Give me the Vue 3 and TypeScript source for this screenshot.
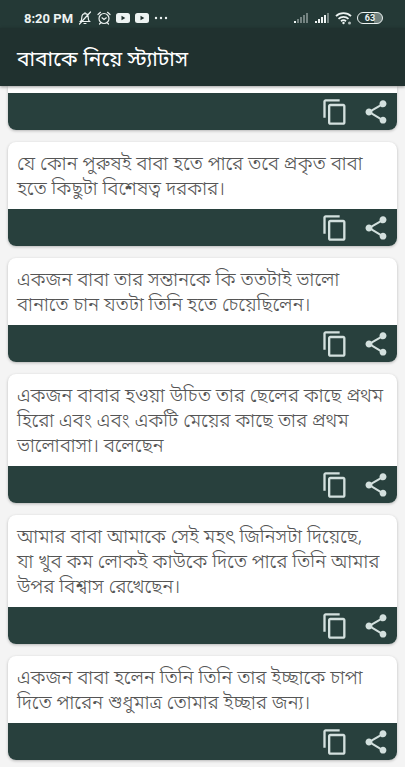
<script setup lang="ts">
interface Quote {
  id: number
  lines: string[]
}

const title = 'বাবাকে নিয়ে স্ট্যাটাস'

const quotes: Quote[] = [
  { id: 1, lines: [] },
  { id: 2, lines: ['যে কোন পুরুষই বাবা হতে পারে তবে প্রকৃত বাবা', 'হতে কিছুটা বিশেষত্ব দরকার।'] },
  { id: 3, lines: ['একজন বাবা তার সন্তানকে কি ততটাই ভালো', 'বানাতে চান যতটা তিনি হতে চেয়েছিলেন।'] },
  { id: 4, lines: ['একজন বাবার হওয়া উচিত তার ছেলের কাছে প্রথম', 'হিরো এবং এবং একটি মেয়ের কাছে তার প্রথম', 'ভালোবাসা। বলেছেন'] },
  { id: 5, lines: ['আমার বাবা আমাকে সেই মহৎ জিনিসটা দিয়েছে,', 'যা খুব কম লোকই কাউকে দিতে পারে তিনি আমার', 'উপর বিশ্বাস রেখেছেন।'] },
  { id: 6, lines: ['একজন বাবা হলেন তিনি তিনি তার ইচ্ছাকে চাপা', 'দিতে পারেন শুধুমাত্র তোমার ইচ্ছার জন্য।'] },
]

function copyQuote(quote: Quote): void {
  void navigator.clipboard?.writeText(quote.lines.join(' '))
}

function shareQuote(quote: Quote): void {
  void navigator.share?.({ text: quote.lines.join(' ') })
}
</script>

<template>
  <div class="screen">
    <div class="status">
      <div class="status-group">
        <span class="clock">8:20 PM</span>
        <svg viewBox="0 0 14 14" width="14" height="14" fill="none" stroke="currentColor" stroke-width="1.2" stroke-linecap="round">
          <path d="M2.5 10.5h9c-1-1-1.3-2-1.3-4C10.2 4 9 2.7 7 2.7S3.8 4 3.8 6.500c0 2-.3 3-1.3 4zM6 12.500h2M7 1.500v1M1.500 13 12.500 1" />
        </svg>
        <svg viewBox="0 0 14 14" width="14" height="14" fill="none" stroke="currentColor" stroke-width="1.2" stroke-linecap="round">
          <circle cx="7" cy="7.5" r="5" />
          <path d="M1 3.500 3.500 1.300M13 3.500l-2.500-2.200M5 6.800l2 1.700 2.300-1.700M3.500 12l-1 1M10.500 12l1 1" />
        </svg>
        <svg v-for="n in 2" :key="n" viewBox="0 0 14 10" width="14" height="10">
          <rect width="14" height="10" rx="2.5" fill="currentColor" />
          <path d="M5.5 2.8v4.400L9.300 5z" fill="#20302e" />
        </svg>
        <svg viewBox="0 0 14 4" width="14" height="4" fill="currentColor">
          <circle cx="2" cy="2" r="1.2" /><circle cx="7" cy="2" r="1.2" /><circle cx="12" cy="2" r="1.2" />
        </svg>
      </div>
      <div class="status-group">
        <svg v-for="strength in [1, 4]" :key="strength" viewBox="0 0 16 12" width="16" height="12" fill="currentColor">
          <rect
            v-for="bar in 5"
            :key="bar"
            :x="bar * 3 - 2"
            :y="11 - bar * 2"
            width="2"
            :height="bar * 2"
            :opacity="bar <= strength ? 1 : 0.4"
          />
        </svg>
        <svg viewBox="0 0 17 14" width="17" height="14" fill="none" stroke="currentColor" stroke-width="1.8">
          <path d="M1 5.200c4-4 11-4 15 0M3.500 7.800c2.800-2.600 7.200-2.600 10 0M6 10.200c1.500-1.300 3.500-1.300 5 0" />
          <circle cx="8.500" cy="12" r="1.2" fill="currentColor" stroke="none" />
          <circle cx="14.500" cy="12" r="1.5" fill="currentColor" stroke="none" opacity="0.7" />
        </svg>
        <span class="battery">63</span>
      </div>
    </div>

    <header class="appbar">
      <h1>{{ title }}</h1>
    </header>

    <main class="feed">
      <article v-for="quote in quotes" :key="quote.id" class="card">
        <p v-if="quote.lines.length" class="text">
          <span v-for="line in quote.lines" :key="line" class="line">{{ line }}</span>
        </p>
        <div v-else class="tail"></div>
        <div class="actions">
          <button type="button" aria-label="কপি" @click="copyQuote(quote)">
            <svg viewBox="0 0 24 24" width="28" height="28" fill="currentColor">
              <path d="M16 1H4c-1.100 0-2 .9-2 2v14h2V3h12V1zm3 4H8c-1.100 0-2 .9-2 2v14c0 1.100.9 2 2 2h11c1.100 0 2-.9 2-2V7c0-1.100-.9-2-2-2zm0 16H8V7h11v14z" />
            </svg>
          </button>
          <button type="button" aria-label="শেয়ার" @click="shareQuote(quote)">
            <svg viewBox="0 0 24 24" width="28" height="28" fill="currentColor">
              <path d="M18 16.080c-.76 0-1.440.3-1.960.77L8.910 12.700c.05-.23.09-.46.09-.7s-.04-.47-.09-.7l7.050-4.110c.54.5 1.250.81 2.040.81 1.660 0 3-1.340 3-3s-1.340-3-3-3-3 1.340-3 3c0 .24.04.47.09.7L8.040 9.810C7.500 9.310 6.790 9 6 9c-1.660 0-3 1.340-3 3s1.340 3 3 3c.79 0 1.500-.31 2.040-.81l7.120 4.160c-.05.21-.08.43-.08.65 0 1.610 1.310 2.920 2.920 2.920s2.920-1.310 2.920-2.920-1.310-2.920-2.920-2.920z" />
            </svg>
          </button>
        </div>
      </article>
    </main>
  </div>
</template>

<style>
body {
  margin: 0;
  background: #f4f4f4;
}
</style>

<style scoped>
.screen {
  display: flex;
  flex-direction: column;
  height: 100vh;
  overflow: hidden;
  font-family: "Noto Sans Bengali", "Noto Sans CJK SC", Roboto, sans-serif;
}

.status {
  display: flex;
  flex: none;
  justify-content: space-between;
  box-sizing: border-box;
  height: 28px;
  padding: 8px 22px 0 24px;
  background: #243936;
  color: #edf3f2;
  font-family: Roboto, sans-serif;
}

.status-group {
  display: flex;
  align-items: center;
  gap: 5px;
  height: 20px;
}

.clock {
  font-size: 13px;
  font-weight: 700;
}

.battery {
  box-sizing: border-box;
  width: 26px;
  height: 12px;
  border: 1px solid currentColor;
  border-radius: 6px;
  background: linear-gradient(90deg, #243936 65%, #71817e 65%);
  font-size: 9px;
  font-weight: 700;
  line-height: 10px;
  text-align: center;
}

.appbar {
  position: relative;
  z-index: 1;
  display: flex;
  flex: none;
  align-items: center;
  box-sizing: border-box;
  height: 58px;
  padding: 8px 17px 0;
  background: #20312f;
  box-shadow: 0 1px 3px rgba(0, 0, 0, 0.4);
  color: #fff;
}

h1 {
  margin: 0;
  font-size: 21px;
  font-weight: 400;
  line-height: 28px;
}

.feed {
  display: flex;
  flex: 1;
  flex-direction: column;
  gap: 12px;
  min-height: 0;
  padding: 0 8px;
  overflow: hidden;
}

.card {
  flex: none;
  border-radius: 8px;
  background: #fff;
  box-shadow: 0 1px 3px rgba(0, 0, 0, 0.25);
}

.card:first-child {
  border-top-left-radius: 0;
  border-top-right-radius: 0;
}

.tail {
  height: 7px;
}

.text {
  margin: 0;
  padding: 11px 9px 6px;
  color: #555;
  font-size: 19px;
  font-weight: 300;
  line-height: 25px;
}

.line {
  display: block;
  white-space: nowrap;
}

.actions {
  display: flex;
  align-items: center;
  justify-content: flex-end;
  gap: 13px;
  height: 37px;
  padding: 0 7px;
  border-radius: 0 0 8px 8px;
  background: #28403d;
}

button {
  display: flex;
  padding: 0;
  border: 0;
  background: none;
  color: #d3e0de;
  cursor: pointer;
}
</style>
